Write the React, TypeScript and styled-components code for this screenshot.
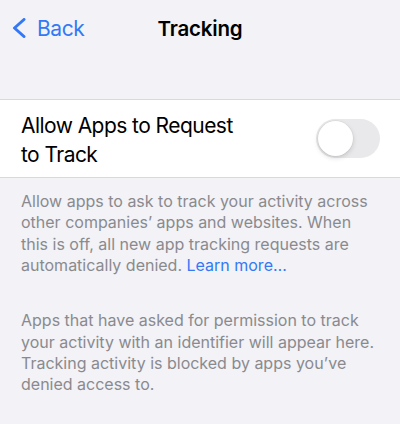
import React from "react";
import styled, { createGlobalStyle } from "styled-components";

const Global = createGlobalStyle`
  html, body { margin: 0; padding: 0; background: #f2f2f7; }
  body { font-family: Inter, "Noto Sans", sans-serif; -webkit-font-smoothing: antialiased; }
`;

const Page = styled.div`
  width: 400px;
  height: 424px;
  background: #f2f2f7;
  overflow: hidden;
`;

const NavBar = styled.div`
  height: 56px;
  display: grid;
  grid-template-columns: 1fr auto 1fr;
  align-items: center;
  padding: 0 12px;
`;

const BackButton = styled.div`
  display: flex;
  align-items: center;
  gap: 11px;
  color: #3478f6;
  font-size: 21px;
  letter-spacing: -0.4px;
`;

const Title = styled.div`
  font-size: 20.5px;
  font-weight: 600;
  color: #000;
  letter-spacing: -0.2px;
`;

const Group = styled.div`
  margin-top: 43px;
  background: #fff;
  border-top: 1px solid #d9d9dd;
  border-bottom: 1px solid #d9d9dd;
`;

const Row = styled.div`
  display: flex;
  align-items: center;
  justify-content: space-between;
  padding: 12px 20px 8px 21px;
`;

const RowLabel = styled.div`
  font-size: 21px;
  line-height: 28.6px;
  color: #000;
  letter-spacing: -0.55px;
  width: 230px;
`;

const Switch = styled.div<{ $on: boolean }>`
  width: 64px;
  height: 39px;
  margin-top: -4px;
  border-radius: 20px;
  background: ${(p) => (p.$on ? "#34c759" : "#e9e9eb")};
  position: relative;
  flex-shrink: 0;
`;

const Knob = styled.div<{ $on: boolean }>`
  position: absolute;
  top: 2px;
  left: ${(p) => (p.$on ? "27px" : "2px")};
  width: 35px;
  height: 35px;
  border-radius: 50%;
  background: #fff;
  box-shadow: 0 2px 5px rgba(0, 0, 0, 0.15), 0 0 0 0.5px rgba(0, 0, 0, 0.06);
`;

const Footer = styled.p<{ $top: number }>`
  margin: ${(p) => p.$top}px 0 0;
  padding: 0 26px 0 21px;
  font-size: 16px;
  line-height: 21.3px;
  color: #8a8a8e;
  letter-spacing: 0;
`;

const Link = styled.span`
  color: #3478f6;
`;

export default function App() {
  return (
    <Page>
      <Global />
      <NavBar>
        <BackButton>
          <svg width="14" height="20" viewBox="0 0 14 20" fill="none">
            <path d="M12 1.5 L2.5 10 L12 18.5" stroke="#3478f6" strokeWidth="3" strokeLinecap="round" strokeLinejoin="round" />
          </svg>
          Back
        </BackButton>
        <Title>Tracking</Title>
        <div />
      </NavBar>
      <Group>
        <Row>
          <RowLabel>Allow Apps to Request to Track</RowLabel>
          <Switch $on={false}>
            <Knob $on={false} />
          </Switch>
        </Row>
      </Group>
      <Footer $top={13}>
        Allow apps to ask to track your activity across other companies’ apps and websites. When this is off, all new app tracking requests are automatically denied. <Link>Learn more…</Link>
      </Footer>
      <Footer $top={34}>
        Apps that have asked for permission to track your activity with an identifier will appear here. Tracking activity is blocked by apps you’ve denied access to.
      </Footer>
    </Page>
  );
}
